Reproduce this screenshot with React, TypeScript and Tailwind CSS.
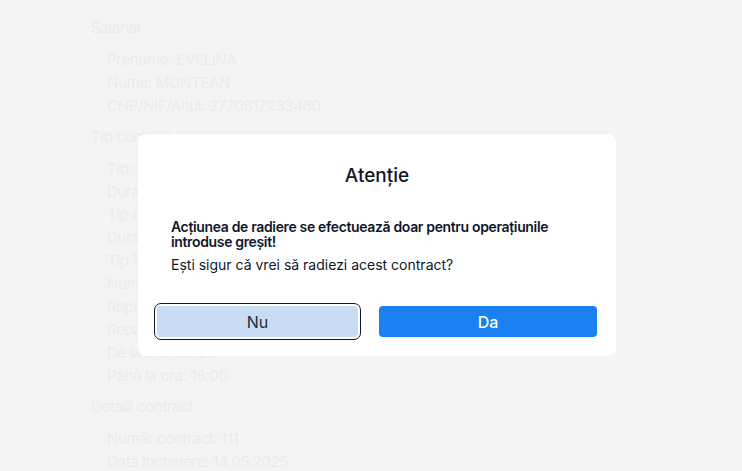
const sections: { title: string; rows: [string, string][] }[] = [
  {
    title: "Salariat",
    rows: [
      ["Prenume:", "EVELINA"],
      ["Nume:", "MUNTEAN"],
      ["CNP/NIF/Altul:", "2770817233460"],
    ],
  },
  {
    title: "Tip contract",
    rows: [
      ["Tip:", "Contract individual de muncă"],
      ["Durată:", "Nedeterminată"],
      ["Tip normă:", "Normă întreagă"],
      ["Durată normă:", "8 ore"],
      ["Tip încadrare:", "Funcție de bază"],
      ["Număr ore:", "40"],
      ["Repartizare timp muncă:", "Zilnic"],
      ["Repartizare program:", "Luni - Vineri"],
      ["De la ora:", "08:00"],
      ["Până la ora:", "16:00"],
    ],
  },
  {
    title: "Detalii contract",
    rows: [
      ["Număr contract:", "111"],
      ["Dată încheiere:", "14.05.2025"],
    ],
  },
];

function Background() {
  return (
    <div className="flex flex-col gap-2 pl-[91px] pt-[16px] text-[15px] leading-[23px] tracking-[-0.3px] text-[#ebebeb]">
      {sections.map((s) => (
        <div key={s.title} className="flex flex-col">
          <div className="mb-2 leading-[24px]">{s.title}</div>
          <div className="flex flex-col pl-4">
            {s.rows.map(([label, value]) => (
              <div key={label}>
                {label} <span>{value}</span>
              </div>
            ))}
          </div>
        </div>
      ))}
    </div>
  );
}

export default function App() {
  return (
    <div
      className="relative h-[471px] w-[742px] overflow-hidden bg-[#f4f4f4]"
      style={{ fontFamily: "Inter, 'Noto Sans', sans-serif" }}
    >
      <Background />

      <div className="absolute left-[138px] top-[134px] flex w-[478px] flex-col rounded-lg bg-white pb-[19px] pt-[28px] text-[#0f172a]">
        <h2 className="text-center text-[19px] font-medium leading-[28px]">Atenție</h2>

        <div className="mt-[29px] px-[33px] text-[14px]">
          <p className="font-semibold leading-[15px] tracking-[-0.35px]">
            Acțiunea de radiere se efectuează doar pentru operațiunile introduse greșit!
          </p>
          <p className="mt-[7px] leading-[18px]">Ești sigur că vrei să radiezi acest contract?</p>
        </div>

        <div className="mt-[32px] flex gap-[21px] pl-[19px]">
          <button className="h-[31px] w-[201px] rounded-[4px] bg-[#c8ddf4] text-[16px] text-[#1e293b] outline outline-1 outline-offset-2 outline-[#0f172a]">
            Nu
          </button>
          <button className="h-[31px] w-[218px] rounded-[4px] bg-[#1b80f2] text-[16px] font-medium text-white">
            Da
          </button>
        </div>
      </div>
    </div>
  );
}
